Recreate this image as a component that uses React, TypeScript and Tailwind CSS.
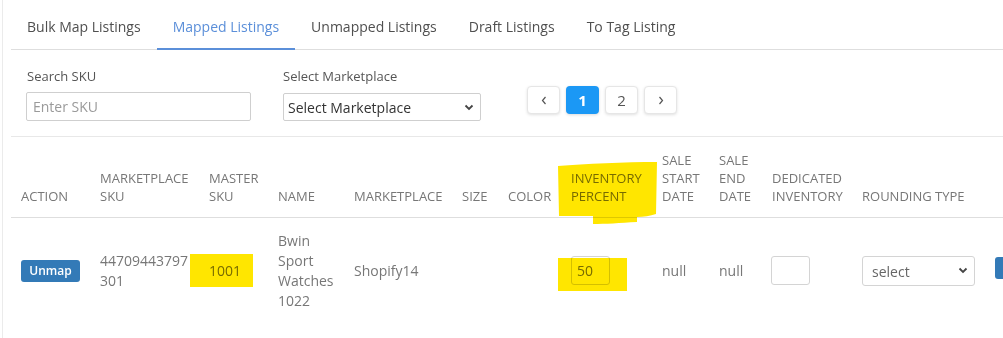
import React from "react";

const tabs = [
  "Bulk Map Listings",
  "Mapped Listings",
  "Unmapped Listings",
  "Draft Listings",
  "To Tag Listing",
];

const columns: { label: string; w: string }[] = [
  { label: "Action", w: "w-[79px]" },
  { label: "Marketplace SKU", w: "w-[109px]" },
  { label: "Master SKU", w: "w-[69px]" },
  { label: "Name", w: "w-[76px]" },
  { label: "Marketplace", w: "w-[108px]" },
  { label: "Size", w: "w-[46px]" },
  { label: "Color", w: "w-[63px]" },
  { label: "Inventory Percent", w: "w-[91px]" },
  { label: "Sale Start Date", w: "w-[57px]" },
  { label: "Sale End Date", w: "w-[53px]" },
  { label: "Dedicated Inventory", w: "w-[90px]" },
  { label: "Rounding Type", w: "w-[133px]" },
  { label: "", w: "w-[100px]" },
];

function Chevron({ dir }: { dir: "left" | "right" | "down" }) {
  if (dir === "down") {
    return (
      <svg width="10" height="7" viewBox="0 0 10 7" className="text-[#444]">
        <polyline points="1.5,1.5 5,5 8.5,1.5" fill="none" stroke="currentColor" strokeWidth="1.8" />
      </svg>
    );
  }
  return (
    <svg width="6" height="9" viewBox="0 0 6 9" className="text-[#555]">
      <polyline
        points={dir === "left" ? "4.5,1 1.5,4.5 4.5,8" : "1.5,1 4.5,4.5 1.5,8"}
        fill="none"
        stroke="currentColor"
        strokeWidth="1.2"
      />
    </svg>
  );
}

function PageButton({ children, active }: { children: React.ReactNode; active?: boolean }) {
  return (
    <button
      className={
        active
          ? "w-[33px] h-[28px] flex items-center justify-center rounded-[4px] bg-[#1b98f5] text-white text-[15px] font-bold shadow-[0_1px_3px_rgba(0,0,0,0.15)]"
          : "w-[33px] h-[28px] flex items-center justify-center rounded-[4px] bg-white border border-[#e6e6e6] text-[#555] text-[15px] shadow-[0_1px_3px_rgba(0,0,0,0.12)]"
      }
    >
      {children}
    </button>
  );
}

export default function App() {
  return (
    <div
      className="relative w-[1003px] h-[338px] overflow-hidden bg-white pl-[2px]"
      style={{ fontFamily: '"Open Sans", "Liberation Sans", sans-serif' }}
    >
      <div className="h-full border-l border-[#ebebeb] pl-[8px]">
        {/* tabs */}
        <nav className="flex border-b border-[#dedede]">
          {tabs.map((t, i) => (
            <div
              key={t}
              className={
                i === 1
                  ? "-mb-px px-4 pt-[17px] pb-[11px] text-[14px] leading-5 font-medium text-[#5b8fd9] border-b-2 border-[#5b8fd9]"
                  : "-mb-px px-4 pt-[17px] pb-[11px] text-[14px] leading-5 font-medium text-[#4f4f4f] border-b-2 border-transparent"
              }
            >
              {t}
            </div>
          ))}
        </nav>

        {/* filters */}
        <div className="flex items-start pl-[15px] pt-[17px] pb-[15px] border-b border-[#e8e8e8]">
          <div className="w-[225px]">
            <div className="text-[13px] leading-[18px] text-[#555] pl-px mb-[7px]">Search SKU</div>
            <input
              placeholder="Enter SKU"
              className="w-[225px] h-[29px] border border-[#cfcfcf] rounded-[2px] px-[6px] text-[14px] text-[#555] placeholder:text-[#9a9a9a] outline-none"
            />
          </div>
          <div className="ml-[32px] w-[198px]">
            <div className="text-[13px] leading-[18px] text-[#555] mb-[8px]">Select Marketplace</div>
            <div className="w-[198px] h-[28px] border border-[#cfcfcf] rounded-[2px] flex items-center justify-between pl-[4px] pr-[6px]">
              <span className="text-[14px] text-[#333]">Select Marketplace</span>
              <Chevron dir="down" />
            </div>
          </div>
          <div className="ml-[46px] mt-[19px] flex gap-[6px]">
            <PageButton>
              <Chevron dir="left" />
            </PageButton>
            <PageButton active>1</PageButton>
            <PageButton>2</PageButton>
            <PageButton>
              <Chevron dir="right" />
            </PageButton>
          </div>
        </div>

        {/* table */}
        <table className="w-[1074px] table-fixed border-collapse">
          <thead>
            <tr>
              {columns.map((c, i) => (
                <th
                  key={i}
                  className={`${c.w} h-[80px] align-bottom pl-[10px] pr-0 pb-[12px] border-b border-[#dedede] text-left text-[13px] leading-[18px] font-normal uppercase text-[#777]`}
                >
                  {c.label}
                </th>
              ))}
            </tr>
          </thead>
          <tbody className="text-[14px] leading-5 text-[#777]">
            <tr>
              <td className="pl-[10px] py-[13px] align-middle">
                <button className="h-[22px] w-[59px] rounded-[3px] bg-[#337ab7] text-white text-[12px] font-semibold">
                  Unmap
                </button>
              </td>
              <td className="pl-[10px] pr-[10px] py-[13px] align-middle break-all">44709443797301</td>
              <td className="pl-[10px] py-[13px] align-middle">1001</td>
              <td className="pl-[10px] py-[13px] align-middle">Bwin Sport Watches 1022</td>
              <td className="pl-[10px] py-[13px] align-middle">Shopify14</td>
              <td className="pl-[10px] py-[13px] align-middle"></td>
              <td className="pl-[10px] py-[13px] align-middle"></td>
              <td className="pl-[10px] py-[13px] align-middle">
                <input
                  defaultValue="50"
                  className="w-[39px] h-[29px] border border-[#d4d4d4] rounded-[3px] px-[5px] text-[14px] text-[#777] outline-none"
                />
              </td>
              <td className="pl-[10px] py-[13px] align-middle">null</td>
              <td className="pl-[10px] py-[13px] align-middle">null</td>
              <td className="pl-[9px] py-[13px] align-middle">
                <input className="w-[39px] h-[29px] border border-[#d4d4d4] rounded-[3px] outline-none" />
              </td>
              <td className="pl-[10px] py-[13px] align-middle">
                <div className="w-[113px] h-[30px] border border-[#d4d4d4] rounded-[3px] flex items-center justify-between pl-[9px] pr-[6px]">
                  <span className="text-[14px] text-[#666] pt-[2px]">select</span>
                  <Chevron dir="down" />
                </div>
              </td>
              <td className="pl-[10px] py-[13px] align-middle">
                <button className="h-[22px] w-[60px] rounded-[3px] bg-[#337ab7]" />
              </td>
            </tr>
          </tbody>
        </table>
      </div>

      {/* highlighter marks over the screenshot */}
      <svg
        className="absolute left-0 top-0 pointer-events-none mix-blend-multiply"
        width="1003"
        height="338"
        viewBox="0 0 1003 338"
      >
        <path
          d="M558 166 C 585 164, 625 162, 657 162 L 656 214 C 650 216, 644 217, 637 217 L 637 222 C 620 223, 605 224, 593 224 L 593 216 L 559 216 Z"
          fill="#ffe600"
        />
        <rect x="558" y="258" width="69" height="33" fill="#ffe600" />
        <rect x="190" y="254" width="63" height="33" fill="#ffe600" />
      </svg>
    </div>
  );
}
